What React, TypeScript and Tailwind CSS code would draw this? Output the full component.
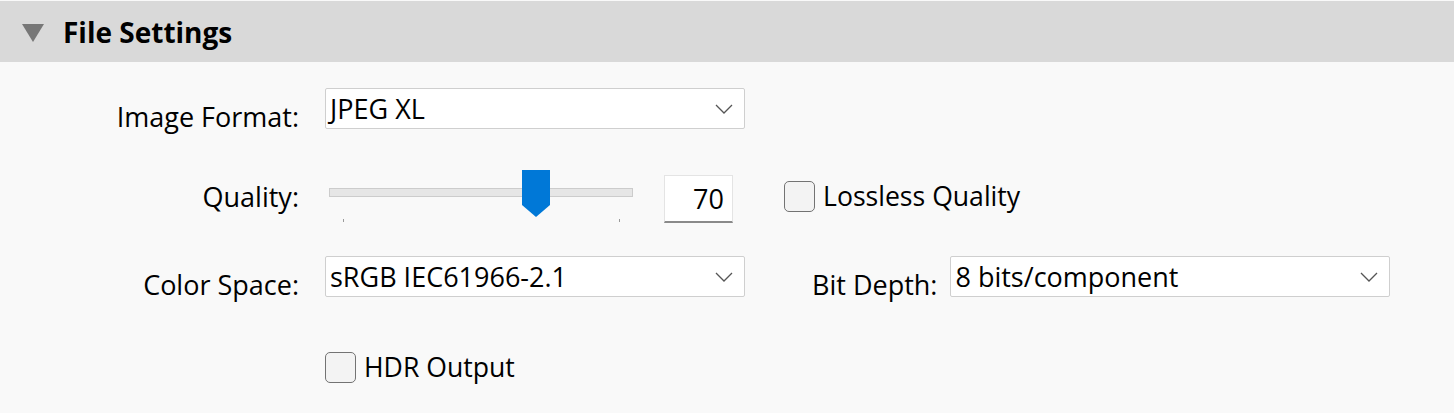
import React from "react";

function Chevron() {
  return (
    <svg width="18" height="10" viewBox="0 0 18 10" className="shrink-0">
      <path d="M1 1 L9 9 L17 1" fill="none" stroke="#555" strokeWidth="1.3" />
    </svg>
  );
}

function Dropdown({ value, width }: { value: string; width: string }) {
  return (
    <div
      className={`${width} h-[41px] bg-white border border-[#cfcfcf] rounded-[2px] flex items-center justify-between pl-[4px] pr-[11px]`}
    >
      <span className="text-[27px] leading-none text-black">{value}</span>
      <Chevron />
    </div>
  );
}

function Checkbox({ label }: { label: string }) {
  return (
    <div className="flex items-center gap-[8px]">
      <div className="w-[31px] h-[31px] rounded-[5px] border-[1.5px] border-[#737373] bg-[#f3f3f3]" />
      <span className="text-[26.6px] leading-none text-black">{label}</span>
    </div>
  );
}

function Label({ text }: { text: string }) {
  return (
    <div className="w-[299px] shrink-0 text-right text-[27px] leading-none text-black pt-4">
      {text}
    </div>
  );
}

export default function App() {
  return (
    <div
      className="w-[1454px] h-[413px] bg-[#f9f9f9] overflow-hidden"
      style={{ fontFamily: '"Open Sans", "Noto Sans", sans-serif' }}
    >
      {/* header */}
      <div className="mt-px h-[61px] bg-[#d9d9d9] flex items-center">
        <svg width="22" height="18" viewBox="0 0 22 18" className="ml-[22px] mt-[2px]">
          <path d="M0 0 L22 0 L11 18 Z" fill="#777" />
        </svg>
        <span className="ml-[19px] text-[28px] font-bold text-black leading-none">
          File Settings
        </span>
      </div>

      {/* Image Format */}
      <div className="mt-[26px] flex items-center h-[41px]">
        <Label text="Image Format:" />
        <div className="ml-[26px]">
          <Dropdown value="JPEG XL" width="w-[420px]" />
        </div>
      </div>

      {/* Quality */}
      <div className="mt-[41px] flex items-center h-[52px]">
        <div className="w-[299px] shrink-0 text-right text-[27px] leading-none text-black">
          Quality:
        </div>
        <div className="ml-[30px] relative w-[304px] h-[52px]">
          <div className="absolute left-0 right-0 top-[18px] h-[9px] bg-[#e6e6e6] border border-[#cccccc]" />
          <div className="absolute left-[14px] top-[49px] w-px h-[3px] bg-[#9a9a9a]" />
          <div className="absolute left-[290px] top-[49px] w-px h-[3px] bg-[#9a9a9a]" />
          <svg
            width="28"
            height="47"
            viewBox="0 0 28 47"
            className="absolute left-[193px] top-0"
          >
            <path d="M0 0 H28 V35 L14 47 L0 35 Z" fill="#0078d7" />
          </svg>
        </div>
        <div className="ml-[31px] w-[69px] h-[48px] mt-[6px] bg-white border border-[#e4e4e4] border-b-[#8a8a8a] border-b-2 flex items-center justify-end pr-[8px]">
          <span className="text-[27px] leading-none text-black">70</span>
        </div>
        <div className="ml-[51px]">
          <Checkbox label="Lossless Quality" />
        </div>
      </div>

      {/* Color Space / Bit Depth */}
      <div className="mt-[34px] flex items-center h-[41px]">
        <Label text="Color Space:" />
        <div className="ml-[26px]">
          <Dropdown value="sRGB IEC61966-2.1" width="w-[420px]" />
        </div>
        <div className="ml-[67px] text-[27px] leading-none text-black pt-4">
          Bit Depth:
        </div>
        <div className="ml-[13px]">
          <Dropdown value="8 bits/component" width="w-[440px]" />
        </div>
      </div>

      {/* HDR */}
      <div className="mt-[55px] ml-[325px]">
        <Checkbox label="HDR Output" />
      </div>
    </div>
  );
}
